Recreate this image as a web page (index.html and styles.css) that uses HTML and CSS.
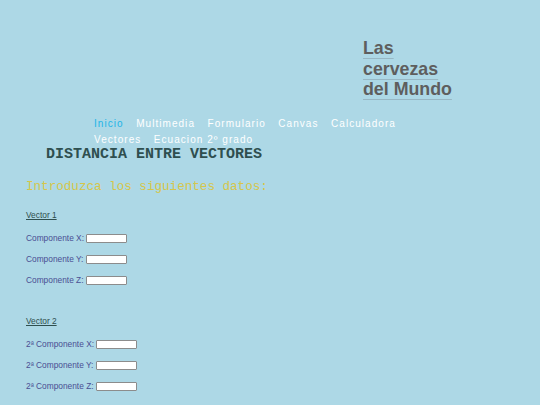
FILE: index.html
```html
<!DOCTYPE html>
<html lang="es">
<head>
<meta charset="utf-8">
<title>Distancia entre vectores</title>
<link rel="stylesheet" href="styles.css">
</head>
<body>
<header class="header">
  <h1 class="brand"><span class="brand-text">Las<br>cervezas<br>del Mundo</span></h1>
  <nav class="nav">
    <a class="nav-item active" href="#">Inicio</a>
    <a class="nav-item" href="#">Multimedia</a>
    <a class="nav-item" href="#">Formulario</a>
    <a class="nav-item" href="#">Canvas</a>
    <a class="nav-item" href="#">Calculadora</a>
    <a class="nav-item" href="#">Vectores</a>
    <a class="nav-item" href="#">Ecuacion 2º grado</a>
  </nav>
</header>
<main class="main">
  <h2 class="title">DISTANCIA ENTRE VECTORES</h2>
  <p class="intro">Introduzca los siguientes datos:</p>
  <form class="form">
    <div class="vec-title">Vector 1</div>
    <div class="row">Componente X:&nbsp;<input class="field" type="text"></div>
    <div class="row">Componente Y:&nbsp;<input class="field" type="text"></div>
    <div class="row">Componente Z:&nbsp;<input class="field" type="text"></div>
    <div class="vec-title second">Vector 2</div>
    <div class="row">2ª Componente X:&nbsp;<input class="field" type="text"></div>
    <div class="row">2ª Componente Y:&nbsp;<input class="field" type="text"></div>
    <div class="row">2ª Componente Z:&nbsp;<input class="field" type="text"></div>
  </form>
</main>
</body>
</html>
```
FILE: styles.css
```css
html, body {
  margin: 0;
  padding: 0;
}
body {
  background: #add8e6;
  font-family: "Liberation Sans", Arial, sans-serif;
  width: 540px;
  height: 405px;
  overflow: hidden;
}
.header {
  padding-top: 38px;
}
.brand {
  margin: 0 0 0 363px;
  font-size: 17.8px;
  font-weight: bold;
  line-height: 20.7px;
  color: #5e5e5e;
}
.brand-text {
  text-decoration: underline;
  text-decoration-color: #97b7c4;
  text-decoration-thickness: 1px;
  text-underline-offset: 4px;
}
.nav {
  margin: 16px 0 0 94px;
  width: 320px;
  display: flex;
  flex-wrap: wrap;
  column-gap: 12.5px;
  font-size: 10px;
  line-height: 16px;
  letter-spacing: 1.05px;
}
.nav-item {
  color: #ffffff;
  text-decoration: none;
}
.nav-item.active {
  color: #22b4e6;
}
.main {
  padding-left: 26px;
}
.title {
  margin: 1px 0 0 20px;
  font-family: "Liberation Mono", "Courier New", monospace;
  font-size: 15px;
  font-weight: bold;
  line-height: 12px;
  color: #2f4f4f;
}
.intro {
  margin: 19px 0 0 0;
  font-family: "Liberation Mono", "Courier New", monospace;
  font-size: 12.6px;
  line-height: 14px;
  color: #d6c64a;
}
.form {
  margin-top: 10.5px;
  font-size: 8.35px;
}
.vec-title {
  height: 21px;
  line-height: 21px;
  margin-bottom: 2px;
  color: #2f4f4f;
  text-decoration: underline;
}
.vec-title.second {
  margin-top: 20px;
}
.row {
  height: 21px;
  display: flex;
  align-items: center;
  color: #4a4f93;
}
.field {
  box-sizing: border-box;
  width: 41px;
  height: 9px;
  margin: 0;
  padding: 0;
  border: 1px solid #8c8c8c;
  border-radius: 1px;
  background: #ffffff;
  font-size: 8px;
}
```
